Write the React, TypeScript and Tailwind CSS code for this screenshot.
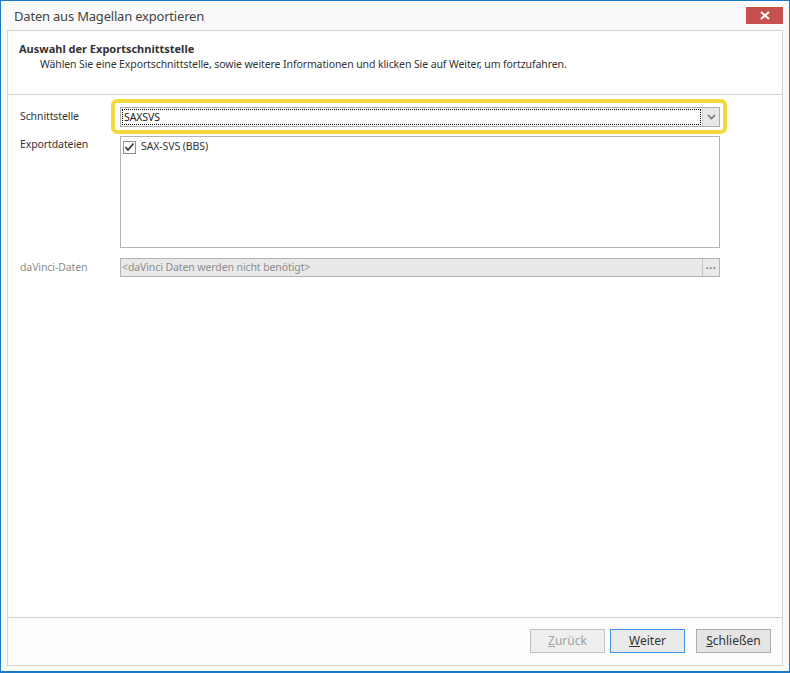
import React from "react";

const font = { fontFamily: '"Noto Sans", "Open Sans", Arial, sans-serif' };

export default function App() {
  return (
    <div
      className="w-[790px] h-[673px] border border-b-2 border-[#1979ca] bg-[#fafafa] flex flex-col text-[#333] overflow-hidden"
      style={font}
    >
      {/* title bar */}
      <div className="h-[29px] flex items-start justify-between pl-[13px] pr-[6px]">
        <div className="text-[13px] tracking-[-0.2px] text-[#444] leading-[18px] mt-[6px]">Daten aus Magellan exportieren</div>
        <div className="w-[37px] h-[17px] mt-[6px] bg-[#c75050] flex items-center justify-center">
          <svg width="10" height="9" viewBox="0 0 10 9">
            <path d="M1 1 L9 8 M9 1 L1 8" stroke="#fff" strokeWidth="2" />
          </svg>
        </div>
      </div>

      {/* inner panel */}
      <div className="mx-[6px] mb-[5px] flex-1 border border-[#d3d3d3] bg-white flex flex-col">
        {/* header */}
        <div className="h-[64px] border-b border-[#d3d3d3] pl-[11px] pt-[10px]">
          <div className="text-[11px] font-bold text-[#333] leading-[16px]">Auswahl der Exportschnittstelle</div>
          <div className="text-[10.5px] tracking-[-0.1px] text-[#333] leading-[15px] pl-[21px]">
            Wählen Sie eine Exportschnittstelle, sowie weitere Informationen und klicken Sie auf Weiter, um fortzufahren.
          </div>
        </div>

        {/* body */}
        <div className="flex-1 pl-[12px] pt-[12px] text-[10.5px] tracking-[-0.1px]">
          {/* row 1 */}
          <div className="flex items-center h-[20px]">
            <div className="w-[100px] text-[#333]">Schnittstelle</div>
            <div className="relative w-[600px] h-[20px]">
              <div className="absolute -left-[9px] -top-[8px] -right-[7px] -bottom-[7px] border-4 border-[#f2d93e] rounded-[6px]" />
              <div className="relative w-full h-full border border-[#adadad] bg-white flex">
                <div className="flex-1 p-[1px]">
                  <div className="h-full border border-dotted border-black flex items-center pl-[1px] text-[#222] leading-none">
                    SAXSVS
                  </div>
                </div>
                <div className="w-[17px] h-full bg-[#e8e8e8] border-l border-[#d0d0d0] flex items-center justify-center">
                  <svg width="9" height="6" viewBox="0 0 9 6">
                    <path d="M1 1 L4.5 4.5 L8 1" stroke="#777" strokeWidth="1.6" fill="none" />
                  </svg>
                </div>
              </div>
            </div>
          </div>

          {/* row 2 */}
          <div className="flex mt-[9px]">
            <div className="w-[100px] text-[#333] leading-[16px]">Exportdateien</div>
            <div className="w-[600px] h-[112px] border border-[#b4b4b4] bg-white pl-[2px] pt-[2px]">
              <div className="flex items-center h-[16px]">
                <div className="w-[13px] h-[13px] border border-[#8f8f8f] bg-white flex items-center justify-center">
                  <svg width="11" height="10" viewBox="0 0 11 10">
                    <path d="M1.5 5 L4 8 L9.5 1.5" stroke="#333" strokeWidth="1.6" fill="none" />
                  </svg>
                </div>
                <span className="ml-[5px] text-[#333]">SAX-SVS (BBS)</span>
              </div>
            </div>
          </div>

          {/* row 3 */}
          <div className="flex items-center mt-[10px]">
            <div className="w-[100px] text-[#8d8d8d]">daVinci-Daten</div>
            <div className="w-[600px] h-[19px] border border-[#b4b4b4] bg-[#e9e9e9] flex">
              <div className="flex-1 flex items-center pl-[1px] text-[#8d8d8d]">&lt;daVinci Daten werden nicht benötigt&gt;</div>
              <div className="w-[17px] h-full border-l border-[#c4c4c4] flex items-center justify-center text-[#707070] leading-none pb-[4px] tracking-[0.5px] font-bold">
                ...
              </div>
            </div>
          </div>
        </div>

        {/* footer */}
        <div className="h-[48px] border-t border-[#d3d3d3] bg-[#fdfdfd] flex items-start justify-end pt-[11px] pr-[11px] text-[12px]">
          <div className="w-[75px] h-[24px] border border-[#bfbfbf] bg-[#efefef] text-[#a0a0a0] flex items-center justify-center">
            <span><span className="underline">Z</span>urück</span>
          </div>
          <div className="ml-[5px] w-[75px] h-[24px] border border-[#3d94e8] bg-[#eaeaea] text-[#333] flex items-center justify-center">
            <span><span className="underline">W</span>eiter</span>
          </div>
          <div className="ml-[11px] w-[75px] h-[24px] border border-[#adadad] bg-[#e5e5e5] text-[#333] flex items-center justify-center">
            <span><span className="underline">S</span>chließen</span>
          </div>
        </div>
      </div>
    </div>
  );
}
